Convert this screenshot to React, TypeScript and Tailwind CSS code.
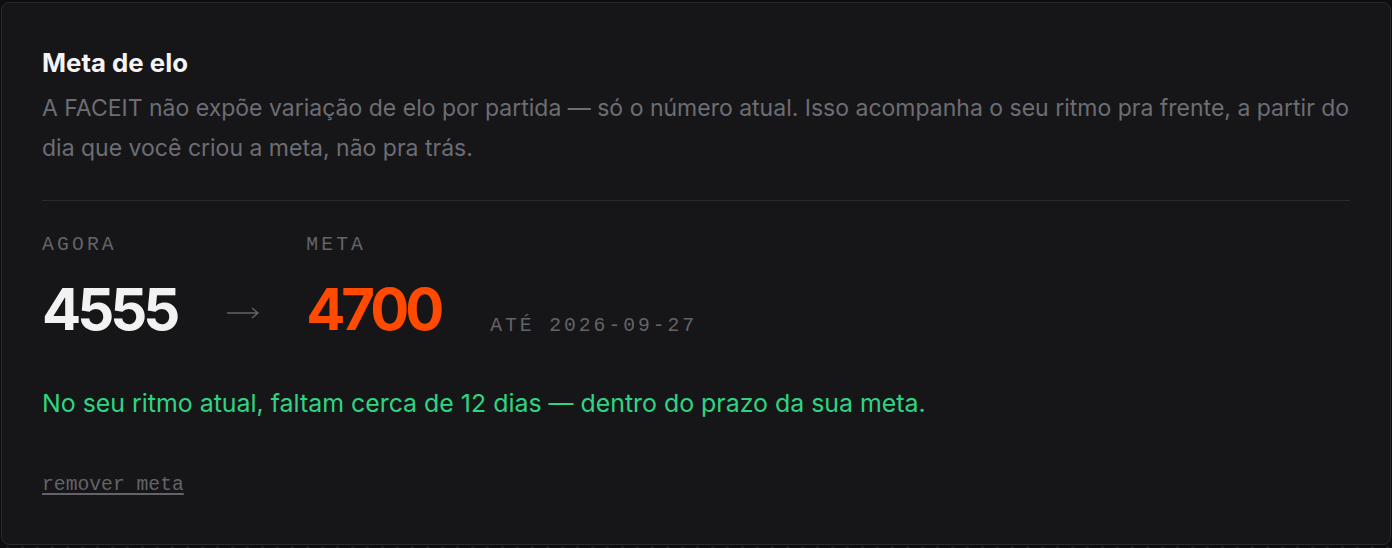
const sans = "font-['Inter','Liberation_Sans',sans-serif]"
const mono = "font-['Liberation_Mono','DejaVu_Sans_Mono',monospace]"

function Stat({ label, value, accent }: { label: string; value: string; accent?: boolean }) {
  return (
    <div className="flex flex-col">
      <span className={`${mono} text-[19.7px] leading-6 tracking-[0.16em] text-[#636369]`}>{label}</span>
      <span
        className={`${sans} mt-[23px] text-[58px] leading-none font-bold tracking-[-0.07em] ${
          accent ? "text-[#ff4a00]" : "text-[#f2f2f3]"
        }`}
      >
        {value}
      </span>
    </div>
  )
}

function Arrow() {
  return (
    <svg width="32" height="12" viewBox="0 0 32 12" className="mb-[19px] ml-[51px] shrink-0" fill="none">
      <path d="M0 6h31M25 1l6 5-6 5" stroke="#636369" strokeWidth="1.4" />
    </svg>
  )
}

export default function App() {
  return (
    <div className="min-h-screen bg-[#0e0e10] bg-[radial-gradient(circle,#222226_1px,transparent_1.5px)] bg-[length:15px_15px] px-px pt-[2px]">
      <section
        className={`${sans} h-[543px] rounded-lg border border-[#2a2a2e] bg-[#161618] px-10 pt-[44px]`}
      >
        <h2 className="text-[25.8px] leading-8 font-bold text-[#f4f4f5]">Meta de elo</h2>
        <p className="mt-[10px] text-[23px] leading-[39.5px] text-[#6d6d74]">
          A FACEIT não expõe variação de elo por partida — só o número atual. Isso acompanha o seu ritmo pra frente, a
          partir do dia que você criou a meta, não pra trás.
        </p>

        <div className="mt-8 h-px bg-[#2a2a2e]" />

        <div className="mt-8 flex items-end">
          <Stat label="AGORA" value="4555" />
          <Arrow />
          <div className="ml-[47px]">
            <Stat label="META" value="4700" accent />
          </div>
          <span className={`${mono} ml-[50px] text-[19.7px] leading-6 tracking-[0.15em] text-[#636369]`}>
            ATÉ 2026-09-27
          </span>
        </div>

        <p className="mt-[49px] text-[24.9px] leading-8 text-[#2fd483]">
          No seu ritmo atual, faltam cerca de 12 dias — dentro do prazo da sua meta.
        </p>

        <button
          className={`${mono} mt-[54px] block text-[19.7px] leading-6 text-[#636369] underline decoration-[1.5px] underline-offset-[3px]`}
        >
          remover meta
        </button>
      </section>
    </div>
  )
}
